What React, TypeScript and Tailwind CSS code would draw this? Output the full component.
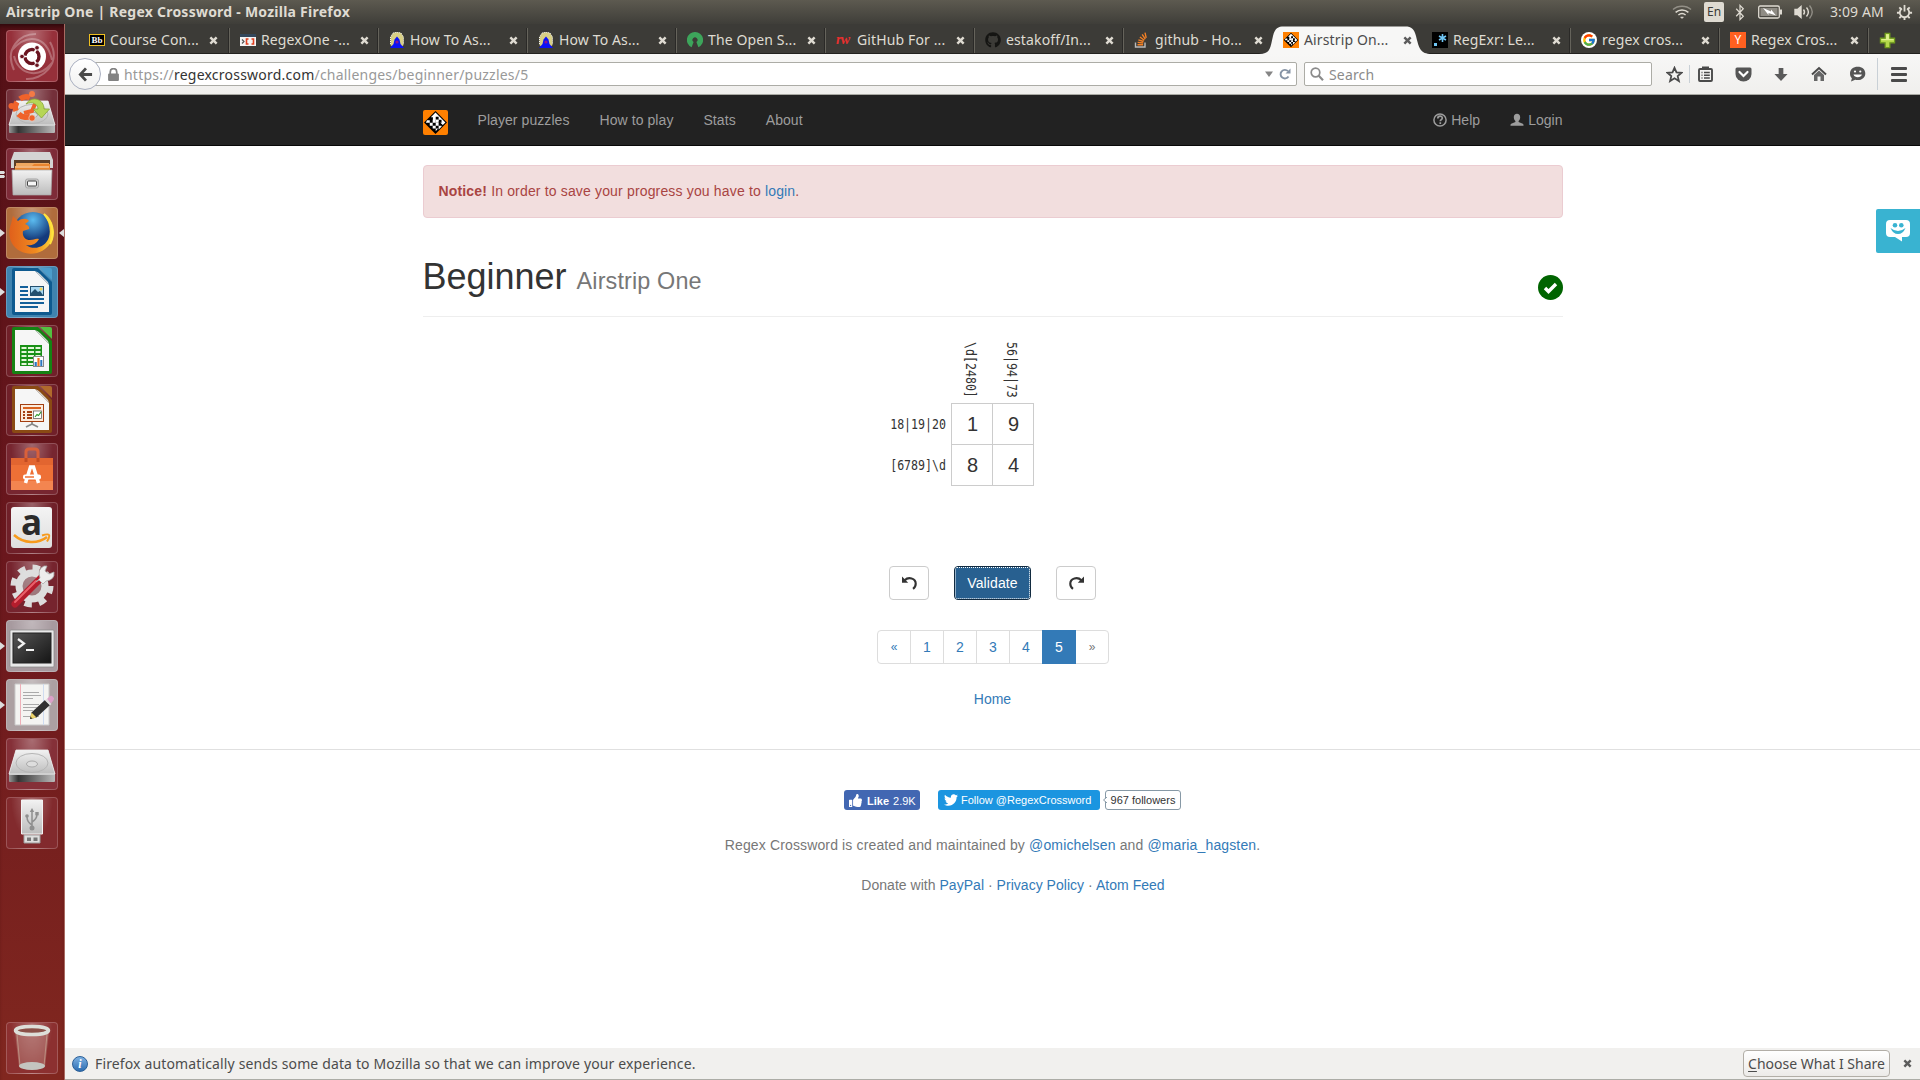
import React from "react";
import { FaTwitter, FaThumbsUp, FaGithub } from "react-icons/fa";
import { FcGoogle } from "react-icons/fc";

const ui = "font-['Noto_Sans',sans-serif]";

/* ---------- favicons ---------- */

function CrosswordMark({ className }: { className: string }) {
  return (
    <svg viewBox="0 0 24 24" className={className}>
      <rect width="24" height="24" fill="#ff8000" />
      <path d="M12 1 23 12 12 23 1 12z" fill="#000" />
      <path d="M12 2.500 21.500 12 19 14.500 16.500 12 14 9.500H9.500V7H7.500z" fill="#fff" />
      <path d="M9.300 9.300h2.900v2.900H9.300zM6.500 12.200h2.800v2.800H6.500zM12.200 12.200H15V15h-2.800zM9.300 15h2.900v2.800H9.300zM15 15h2.800v1L15 18.700zM12.200 17.800h2.300L12.200 20.500zM3.800 9.800h2.700v2.400H2.800z" fill="#fff" />
      <path d="M12.200 6.500H15v2.800h-2.800zM15 9.300h2.800v2.900H15z" fill="#000" />
      <path d="M12.200 9.300H15v2.900h-2.800z" fill="#fff" />
    </svg>
  );
}

function Favicon({ kind }: { kind: string }) {
  const c = "block h-4 w-4 shrink-0";
  switch (kind) {
    case "bb":
      return (
        <div className="flex h-3 w-4 shrink-0 items-center justify-center border border-[#f0c020] bg-black font-['Liberation_Serif',serif] text-[9px] leading-none font-bold text-white">
          Bb
        </div>
      );
    case "one":
      return (
        <svg viewBox="0 0 16 16" className={c}>
          <rect y="2" width="16" height="12" fill="#f4f4f4" />
          <rect y="2" width="16" height="3" fill="#33475b" />
          <path d="M2 7.5l2 2-2 2" stroke="#555" strokeWidth="1.2" fill="none" />
          <path d="M8.5 7H6.5v5h2M11.5 7h2v5h-2" stroke="#e04020" strokeWidth="1.6" fill="none" />
        </svg>
      );
    case "wiz":
      return (
        <svg viewBox="0 0 16 16" className={c}>
          <path d="M4 1l4-1 4 1 2.500 4v8l-2 2h-9l-2-2V5z" fill="#d8cf86" />
          <path d="M1.500 12V5L4 1l4-.8L12 1l2.500 4v7" stroke="#f2f2f2" strokeDasharray="1 1" fill="none" />
          <path d="M8 4.500l2.500 3 1 4.500 3.500 4H1l3.500-4 1-4.500z" fill="#0b12f5" />
          <circle cx="8" cy="10" r="1.600" fill="#8a1590" />
        </svg>
      );
    case "osi":
      return (
        <svg viewBox="0 0 16 16" className={c}>
          <path d="M8 0a8 8 0 0 0-3.4 15.3L6.6 10a2.5 2.5 0 1 1 2.8 0l2 5.3A8 8 0 0 0 8 0z" fill="#3da55b" />
        </svg>
      );
    case "rw":
      return (
        <div className="w-4 shrink-0 font-['Liberation_Serif',serif] text-[14px] leading-4 font-bold tracking-[-0.8px] text-[#e8302e] italic">
          rw
        </div>
      );
    case "gh":
      return <FaGithub className="h-4 w-4 shrink-0 text-[#151513]" />;
    case "so":
      return (
        <svg viewBox="0 0 16 16" className={c}>
          <path d="M1.500 10.500V15h9.500v-4.500" stroke="#bbb" strokeWidth="1.400" fill="none" />
          <path d="M3.500 12.800h5.600M3.700 10.400l5.500.6M4.400 7.800l5.200 1.700M5.900 5l4.400 3.200M8.200 2.400l3.100 4.800M11 .6l1.200 5.200" stroke="#f48024" strokeWidth="1.400" />
        </svg>
      );
    case "cw":
      return <CrosswordMark className={c} />;
    case "rx":
      return (
        <svg viewBox="0 0 16 16" className={c}>
          <rect width="16" height="16" fill="#000" />
          <rect x="2" y="11" width="3" height="3" fill="#70c7f5" />
          <path d="M10.500 2v8M7 4l7 4M14 4L7 8" stroke="#70c7f5" strokeWidth="1.600" />
        </svg>
      );
    case "g":
      return (
        <div className="flex h-4 w-4 shrink-0 items-center justify-center rounded-full bg-white">
          <FcGoogle className="h-[14px] w-[14px]" />
        </div>
      );
    default:
      return (
        <div className="flex h-4 w-4 shrink-0 items-center justify-center bg-[#ff6020] text-[12px] leading-none text-white">Y</div>
      );
  }
}

function Cross({ className }: { className: string }) {
  return (
    <svg viewBox="0 0 10 10" className={className}>
      <path d="M1.500 1.500l7 7M8.500 1.500l-7 7" stroke="currentColor" strokeWidth="2.700" />
    </svg>
  );
}

const tabs = [
  { icon: "bb", text: "Course Con..." },
  { icon: "one", text: "RegexOne -..." },
  { icon: "wiz", text: "How To As..." },
  { icon: "wiz", text: "How To As..." },
  { icon: "osi", text: "The Open S..." },
  { icon: "rw", text: "GitHub For ..." },
  { icon: "gh", text: "estakoff/In..." },
  { icon: "so", text: "github - Ho..." },
  { icon: "cw", text: "Airstrip On..." },
  { icon: "rx", text: "RegExr: Le..." },
  { icon: "g", text: "regex cros..." },
  { icon: "y", text: "Regex Cros..." },
];

function TabStrip() {
  return (
    <div className="flex h-[30px] border-b border-[#22211f] bg-[#3c3b37] pl-[15px]">
      {tabs.map((t, i) => {
        const active = i === 8;
        return (
          <div key={i} className="relative flex h-[30px] w-[149px] shrink-0 items-center pt-[2px] pl-2.5">
            {active && (
              <svg viewBox="0 0 173 28" className="absolute top-[2px] -left-[13px] h-7 w-[173px]">
                <path d="M0 28C12 28 11 22 14 10C16 2 19 .5 25 .5H146C153 .5 155 3 157 10C160 22 161 28 173 28z" fill="#f7f7f6" />
              </svg>
            )}
            <div className={"relative flex w-full items-center " + (i === 0 ? "-left-px" : "left-px")}>
              <Favicon kind={t.icon} />
              <span
                className={
                  "ml-[5px] w-[98px] text-[14px] leading-5 tracking-[0.13px] whitespace-nowrap " +
                  (active ? "text-[#4c4c4c]" : "text-[#dfdbd2]")
                }
              >
                {t.text}
              </span>
              <Cross className={"ml-px h-[9px] w-[9px] shrink-0 " + (active ? "text-[#5c5c5c]" : "text-[#dfdbd2]")} />
            </div>
            {!active && i !== 7 && <div className="absolute top-1 -right-px h-[25px] w-0.5 border-l border-[#2a2927] bg-[#65635b]" />}
          </div>
        );
      })}
      <svg viewBox="0 0 18 18" className="mt-2 ml-[11px] h-[17px] w-[17px]">
        <path d="M6.500 1.500h5v5h5v5h-5v5h-5v-5h-5v-5h5z" fill="#b4d84a" stroke="#6f9a1e" strokeWidth="1.300" />
        <path d="M7.500 2.500h3v5h5v1.200h-13V7.500h5z" fill="#dff08f" />
      </svg>
    </div>
  );
}

/* ---------- system panel ---------- */

function TopPanel() {
  return (
    <div className="flex h-6 items-center bg-linear-to-b from-[#5d5a50] to-[#3f3e39] pl-1.5 text-[#dfdbd2]">
      <span className="text-[14px] leading-6 font-bold tracking-[0.24px] whitespace-nowrap">Airstrip One | Regex Crossword - Mozilla Firefox</span>
      <div className="flex-1" />
      <svg viewBox="0 0 20 14" className="h-[14px] w-5" fill="none" stroke="#dfdbd2" strokeWidth="1.500">
        <path d="M1 4.500C6 .2 14 .2 19 4.500" opacity=".45" />
        <path d="M3.600 7.400c3.700-3.200 9.100-3.200 12.800 0M6.400 10c2.100-1.800 5.100-1.800 7.200 0" />
        <path d="M8.500 12l1.500 1.600 1.500-1.600z" fill="#dfdbd2" strokeWidth=".5" />
      </svg>
      <div className="ml-3 flex h-5 w-5 items-center justify-center rounded-[2px] bg-[#dfdbd2] text-[12px] leading-none text-[#3c3b37]">En</div>
      <svg viewBox="0 0 10 18" className="ml-[11px] h-[17px] w-2.5" fill="none" stroke="#dfdbd2" strokeWidth="1.300">
        <path d="M1 5l7.500 8L5 16.500v-15L8.500 5 1 13" />
      </svg>
      <svg viewBox="0 0 24 14" className="ml-[13px] h-[14px] w-6">
        <rect x=".7" y="1" width="20.600" height="12" rx="1.500" fill="none" stroke="#dfdbd2" strokeWidth="1.300" />
        <rect x="2.500" y="3" width="17" height="8" fill="#8f8c84" />
        <rect x="22" y="4.500" width="2" height="5" fill="#dfdbd2" />
        <path d="M5 3l8 3.500 0-2 5 6-7.500-2.600v2z" fill="#fff" />
      </svg>
      <svg viewBox="0 0 20 16" className="ml-3 h-4 w-5" fill="none" stroke="#dfdbd2" strokeWidth="1.400">
        <path d="M1 5.500h2.500L7 2.500v11l-3.500-3H1z" fill="#dfdbd2" />
        <path d="M9.500 5.500c1.200 1.500 1.200 3.500 0 5M12.500 3.500c2.300 2.700 2.300 6.300 0 9" />
        <path d="M15.500 1.500c3.400 4 3.400 9 0 13" opacity=".45" />
      </svg>
      <span className="ml-4 w-[54px] text-[14px] leading-6 tracking-[0.1px] whitespace-nowrap">3:09 AM</span>
      <svg viewBox="0 0 18 18" className="mr-[7px] ml-3 h-[17px] w-[17px]" fill="none" stroke="#dfdbd2">
        <path d="M6.300 4.800a5 5 0 1 0 5.400 0" strokeWidth="1.900" />
        <path d="M9 1v7" strokeWidth="1.900" />
        <path d="M3.500 3.500l1.800 1.800M14.500 3.500l-1.800 1.800M1 9.300h2.500M14.500 9.300H17M3.500 15l1.800-1.900M14.500 15l-1.800-1.900M9 14.500V17" strokeWidth="2" />
      </svg>
    </div>
  );
}

/* ---------- browser toolbar ---------- */

function Toolbar() {
  return (
    <div className="flex h-[41px] items-center border-b border-[#a9a9a3] bg-linear-to-b from-[#f7f7f6] to-[#f0efed]">
      <div className="z-10 ml-1 flex h-8 w-8 shrink-0 items-center justify-center rounded-full border border-[#a9afc0] bg-linear-to-b from-white to-[#f1f1f0]">
        <svg viewBox="0 0 16 16" className="h-[15px] w-[15px]" fill="none" stroke="#4a4a4a" strokeWidth="3">
          <path d="M8.500 1.500L2.500 8l6 6.500M3 8h12" />
        </svg>
      </div>
      <div className="-ml-4 flex h-6 w-[1212px] items-center rounded-[2px] border border-[#acaca6] bg-white pl-[22px]">
        <svg viewBox="0 0 10 12" className="h-[13px] w-[11px]">
          <rect y="5" width="10" height="7" rx="1" fill="#828282" />
          <path d="M2 6V3.600a3 3 0 0 1 6 0V6" fill="none" stroke="#828282" strokeWidth="1.600" />
        </svg>
        <span className="mt-px ml-[5px] text-[14px] leading-5 tracking-[0.22px] whitespace-nowrap text-[#999]">
          https://<span className="text-[#333]">regexcrossword.com</span>/challenges/beginner/puzzles/5
        </span>
        <div className="flex-1" />
        <svg viewBox="0 0 8 6" className="h-[6px] w-2"><path d="M0 .5h8L4 6z" fill="#858585" /></svg>
        <svg viewBox="0 0 12 12" className="mr-[5px] ml-1.5 h-3 w-3" fill="none" stroke="#8593a5" strokeWidth="1.900">
          <path d="M9.500 8.500A4.300 4.300 0 1 1 9 3.200" />
          <path d="M11.500.5v5h-5z" fill="#8593a5" stroke="none" />
        </svg>
      </div>
      <div className="ml-[7px] flex h-6 w-[348px] items-center rounded-[2px] border border-[#acaca6] bg-white pl-[5px]">
        <svg viewBox="0 0 14 14" className="h-[14px] w-[14px]" fill="none" stroke="#8b8b8b">
          <circle cx="5.500" cy="5.500" r="4.300" strokeWidth="1.700" />
          <path d="M8.500 8.500l4.500 4.700" strokeWidth="2.200" />
        </svg>
        <span className="mt-px ml-[5px] text-[14px] leading-5 tracking-[0.15px] text-[#8b8b8b]">Search</span>
      </div>
      <svg viewBox="0 0 17 17" className="ml-[14px] h-[17px] w-[17px]">
        <path d="M8.500 1.800l2 4.600 5 .4-3.800 3.300 1.200 4.900-4.400-2.700L4.100 15l1.200-4.900L1.500 6.800l5-.4z" fill="none" stroke="#4a4a4a" strokeWidth="1.800" />
      </svg>
      <div className="ml-1.5 h-[18px] w-px bg-[#c9d0d6]" />
      <svg viewBox="0 0 15 16" className="ml-2 h-4 w-[15px]" fill="none" stroke="#4a4a4a">
        <rect x="1" y="3" width="13" height="12" rx="1" strokeWidth="1.900" />
        <path d="M5 2.500V1.500h5v1" strokeWidth="2" />
        <path d="M3.500 6.500h1M3.500 9.300h1M3.500 12h1M6 6.500h5.800M6 9.300h5.800M6 12h5.800" strokeWidth="1.500" />
      </svg>
      <svg viewBox="0 0 17 15" className="ml-[22px] h-[15px] w-[17px]">
        <path d="M2 .5h13q1.500 0 1.500 1.500v5a8 7.500 0 0 1-16 0V2Q.5.5 2 .5z" fill="#555" />
        <path d="M4.500 5l4 4 4-4" fill="none" stroke="#fff" strokeWidth="2.200" strokeLinecap="round" />
      </svg>
      <svg viewBox="0 0 14 16" className="ml-[22px] h-[15px] w-[14px]"><path d="M4.500 1h5v6.500H14L7 15 0 7.500h4.500z" fill="#5a5a5a" /></svg>
      <svg viewBox="0 0 16 16" className="ml-[23px] h-4 w-4">
        <path d="M1 8.500L8 2l7 6.500" fill="none" stroke="#4a4a4a" strokeWidth="2" />
        <path d="M3 9l5-4.500L13 9v6H9.500v-4.500h-3V15H3z" fill="#666" />
      </svg>
      <svg viewBox="0 0 17 16" className="ml-[22px] h-4 w-[17px]">
        <path d="M8.700.8c4.400 0 7.600 2.700 7.600 6.600s-3.200 6.700-7.600 6.700c-1 0-1.700-.1-2.500-.3L2 15.400l.9-3.200C1.600 11 1 9.300 1 7.400 1 3.500 4.300.8 8.700.8z" fill="#555" />
        <circle cx="6" cy="5.500" r="1.100" fill="#fff" />
        <circle cx="11.300" cy="5.500" r="1.100" fill="#fff" />
        <path d="M4.500 8.500h8.400c-.8 3.600-7.600 3.600-8.400 0z" fill="#fff" />
      </svg>
      <div className="ml-[11px] h-8 w-px bg-[#c9d0d6]" />
      <div className="ml-[13px] flex w-4 flex-col gap-[3px]">
        <div className="h-[3px] rounded-[1px] bg-[#4a4a4a]" />
        <div className="h-[3px] rounded-[1px] bg-[#4a4a4a]" />
        <div className="h-[3px] rounded-[1px] bg-[#4a4a4a]" />
      </div>
    </div>
  );
}

/* ---------- launcher ---------- */

function Drive() {
  return (
    <>
      <path d="M10 12h32l7 24v6q0 2-2 2H5q-2 0-2-2v-6z" fill="#b9b9b9" />
      <path d="M10 12h32l7 24H3z" fill="url(#metal)" stroke="#ededed" strokeWidth=".8" />
      <path d="M3 37h46v6q0 1-2 1H5q-2 0-2-1z" fill="url(#darkmetal)" />
      <ellipse cx="26" cy="25" rx="16" ry="9.500" fill="none" stroke="#b5b5b5" />
      <ellipse cx="26" cy="26" rx="5.500" ry="3" fill="#ddd" stroke="#aaa" />
    </>
  );
}

function DocPage({ color, dark }: { color: string; dark: string }) {
  return (
    <>
      <path d="M6 4q0-2 2-2h24l14 14v31q0 2-2 2H8q-2 0-2-2z" fill={dark} />
      <path d="M34 2h10q2 0 2 2v10z" fill={color} />
      <path d="M9 5h20l14 14v27H9z" fill="#f6f6f6" />
      <path d="M29 5l14 14q-1-4-4-6l-5-5q-2-2-5-3z" fill="#d5d5d5" />
    </>
  );
}

const icons: Record<string, React.ReactNode> = {
  dash: (
    <>
      <path d="M8 40C-2 18 14 4 30 4M44 12c12 22-8 38-24 37M6 20c14-16 34-16 40 10M46 33C32 50 12 44 8 26" fill="none" stroke="#fff" strokeOpacity=".28" strokeWidth="2" />
      <circle cx="26" cy="26.500" r="14" fill="#fff" />
      <circle cx="26" cy="26.500" r="7" fill="none" stroke="#6a1420" strokeWidth="3.400" />
      <path d="M26 26.500L13 26.500M26 26.500l7-12M26 26.500l7 12" stroke="#fff" strokeWidth="1.600" />
      <circle cx="26" cy="26.500" r="5" fill="#fff" />
      <circle cx="16" cy="26.500" r="2.300" fill="#6a1420" stroke="#fff" strokeWidth=".8" />
      <circle cx="31" cy="17.800" r="2.300" fill="#6a1420" stroke="#fff" strokeWidth=".8" />
      <circle cx="31" cy="35.200" r="2.300" fill="#6a1420" stroke="#fff" strokeWidth=".8" />
    </>
  ),
  install: (
    <>
      <Drive />
      <path d="M24 8.500A10 10 0 0 0 14 10M11 13a10 10 0 0 0-1 9M12.500 25a10 10 0 0 0 12 2" fill="none" stroke="#f0622a" strokeWidth="5.500" />
      <path d="M18 24l8-2 3-7" fill="none" stroke="#f0622a" strokeWidth="4" />
      <circle cx="5.500" cy="17" r="3" fill="#f0622a" />
      <circle cx="26" cy="5" r="3" fill="#f47a45" />
      <circle cx="26" cy="29" r="3.200" fill="#f0622a" stroke="#e8e8e8" strokeWidth=".6" />
      <path d="M20 15c6-9 18-5 18 5h5.500L35.500 29 27 20h5c0-5-6-8-12-5z" fill="#b6d656" stroke="#86a436" strokeWidth=".8" />
    </>
  ),
  files: (
    <>
      <path d="M8 4h36l3 8v8H5v-8z" fill="#d4d4d4" />
      <path d="M8 12h36v10H8z" fill="#5d3d26" />
      <path d="M10 15h33v3H10z" fill="#f0a860" />
      <path d="M9 18h17l2-2h16v7H9z" fill="#e9842e" />
      <path d="M9 19h34" stroke="#fbe2c4" />
      <path d="M6 22h40l-1 25H7z" fill="url(#metal)" stroke="#a9a9a9" strokeWidth=".7" />
      <rect x="19.500" y="31" width="13" height="9" rx="2" fill="#ccc" stroke="#a5a5a5" />
      <rect x="21.500" y="33" width="9" height="5" rx="1" fill="#f7f7f7" stroke="#444" />
    </>
  ),
  firefox: (
    <>
      <circle cx="27" cy="25" r="20" fill="url(#globe)" />
      <path d="M38 7c9 6 12 18 7 28-6 11-20 15-31 9C4 39 1 27 5 17l2-8 5 5c4-3 9-3 11 0l-4 3c3 1 5 3 4 5l-6 2c-1 5 2 9 7 9 4 0 5-2 9-1-3 6-9 7-13 6 8 6 20 2 23-8 2-7 0-15-5-23z" fill="url(#fox)" />
      <path d="M38 7c8 6 12 19 6 30 6-13 1-21-6-30z" fill="#fff04f" stroke="#ffe23d" strokeWidth="2" />
    </>
  ),
  writer: (
    <>
      <DocPage color="#4c9dcb" dark="#0e5a8f" />
      <path d="M14 21h8M14 25h8M14 29h8M14 33h24M14 37h24M14 41h18" stroke="#14609a" strokeWidth="2" />
      <rect x="24.500" y="20.500" width="13" height="9" fill="#a9d8f2" stroke="#24506f" />
      <path d="M25 29v-2l4-4 3 3 2-1 3 4z" fill="#24506f" />
      <circle cx="35" cy="23" r="1.500" fill="#f7d14b" />
    </>
  ),
  calc: (
    <>
      <DocPage color="#53c041" dark="#158313" />
      <rect x="14" y="20" width="22" height="21" fill="#199016" />
      <path d="M15.500 23h5M22 23h6M29.500 23h5M15.500 27h5M22 27h6M29.500 27h5M15.500 31h5M22 31h6M29.500 31h5M15.500 35h5M22 35h6M15.500 39h5M22 39h5" stroke="#e4f6da" strokeWidth="2.200" />
      <rect x="27.500" y="31.500" width="10" height="10" fill="#fff" stroke="#888" />
      <path d="M29.700 41v-4" stroke="#2b77c0" strokeWidth="2.200" />
      <path d="M32.500 41v-8" stroke="#f0731e" strokeWidth="2.200" />
      <path d="M35.300 41v-6" stroke="#2b77c0" strokeWidth="2" />
    </>
  ),
  impress: (
    <>
      <DocPage color="#b06a2c" dark="#8a4a14" />
      <rect x="14.500" y="20.500" width="23" height="17" fill="#fbeadb" stroke="#a33e10" />
      <path d="M17 24h18" stroke="#d9621f" strokeWidth="2" />
      <path d="M17 28h2M17 31h2M17 34h2M21 28h5M21 31h5M21 34h5" stroke="#a33e10" strokeWidth="2" />
      <rect x="27.500" y="27" width="8" height="7.500" fill="#fff" stroke="#666" strokeWidth=".8" />
      <path d="M29 33l2-2.500 1.500 1L35 28" stroke="#2d9a2d" fill="none" strokeWidth="1.200" />
      <path d="M26 38v2l-6 3M26 40l6 3" stroke="#888" strokeWidth="1.800" fill="none" />
    </>
  ),
  software: (
    <>
      <path d="M20 18V9q0-3 3-3h6q3 0 3 3v9" fill="none" stroke="#d9603a" strokeWidth="3" />
      <path d="M5 15h42v32H5z" fill="#ee7036" />
      <path d="M5 15h42v7H5z" fill="#e26530" />
      <path d="M20 15v4M32 15v4" stroke="#c24c22" strokeWidth="3" />
      <path d="M5 38h42v9H5z" fill="#f38550" />
      <path d="M19.500 40l5-16h3l5 16" fill="none" stroke="#fff" strokeWidth="3.500" />
      <rect x="17" y="31.500" width="18" height="5" rx="2" fill="#fff" />
      <path d="M19 34h9" stroke="#ee7036" strokeWidth="1.500" />
    </>
  ),
  settings: (
    <>
      <circle cx="26" cy="25" r="18.500" fill="none" stroke="#dcdcdc" strokeWidth="6" strokeDasharray="7.300 7.230" />
      <circle cx="26" cy="25" r="13" fill="#bbb" fillOpacity=".5" stroke="#dedede" strokeWidth="7" />
      <path d="M9 43L36 16" stroke="#b41d2c" strokeWidth="7" strokeLinecap="round" />
      <path d="M9 41L30 20" stroke="#e9606a" strokeWidth="2" strokeLinecap="round" />
      <path d="M30 21l4-4Q31 8 38 5l3 0-2 5 4 3 5-2q1 8-8 9l-3 3-4-4z" fill="#ededed" stroke="#a9a9a9" strokeWidth=".8" />
    </>
  ),
  terminal: (
    <>
      <rect x="4" y="10" width="44" height="37" rx="1" fill="#e9e9e9" stroke="#8c8c8c" strokeWidth=".8" />
      <rect x="7" y="13" width="38" height="30" fill="url(#term)" stroke="#222" />
      <path d="M12 19l6 4.500-6 4.500M20 30h8" fill="none" stroke="#f2f2f2" strokeWidth="2.200" />
    </>
  ),
  editor: (
    <>
      <path d="M9 5h34v41H9z" fill="#f4f4f2" stroke="#c9c9c9" />
      <path d="M14.500 5v41" stroke="#eeb0b8" />
      <path d="M37.500 5v41" stroke="#cfdcf0" />
      <path d="M17 13.500h16M17 16.500h18M17 19.500h10M17 25.500h16M17 28.500h14M17 31.500h10M17 37.500h16" stroke="#aaa" strokeWidth="1" />
      <path d="M24 40l1.500-6.500L39 21l5 5-13.500 12.500z" fill="#303030" />
      <path d="M41 20l2.500-2.500q1.500-1.500 3.500.3t.4 3.700L45 24.500z" fill="#dca0c8" />
      <path d="M39 21.500l5 5 1.500-1.500L40.500 20z" fill="#ddd" />
      <path d="M24 40l1.500-6.500 5 5z" fill="#ecd36a" />
      <path d="M24 40l.6-2.300 1.700 1.700z" fill="#222" />
    </>
  ),
  disk: <Drive />,
  usb: (
    <>
      <path d="M18 38h16v8H18z" fill="#dedede" stroke="#9b9b9b" />
      <path d="M21 40.500h4v3.500h-4zM27.500 40.500h4v3.500h-4z" fill="#777" />
      <path d="M15.500 3h21v34h-21z" fill="url(#metal)" stroke="#f3f3f3" />
      <path d="M26 31V13M26 28q-5-3-5-8M26 25q5-3 5-8" fill="none" stroke="#8f8f8f" strokeWidth="1.500" />
      <path d="M23.800 15L26 11l2.200 4z" fill="#8f8f8f" />
      <circle cx="26" cy="31" r="2.500" fill="#8f8f8f" />
      <circle cx="21" cy="19" r="1.800" fill="#8f8f8f" />
      <rect x="29.300" y="15" width="3.400" height="3.400" fill="#8f8f8f" />
    </>
  ),
  trash: (
    <>
      <path d="M9 9h34l-4 36q-13 5-26 0z" fill="#c89a94" fillOpacity=".4" />
      <path d="M11 12l3 32M41 12l-3 32" stroke="#ddb" strokeOpacity=".4" />
      <ellipse cx="26" cy="44" rx="13" ry="4" fill="#c4c5bf" />
      <ellipse cx="26" cy="8.500" rx="16.500" ry="4" fill="#8b5048" stroke="#dddfd9" strokeWidth="3.500" />
    </>
  ),
};

function AmazonIcon() {
  return (
    <div className="relative m-1 h-[41px] w-[41px] rounded-[3px] bg-linear-to-b from-[#f4f4f4] to-[#dedede]">
      <div className="text-center font-['Open_Sans',sans-serif] text-[35px] leading-[30px] font-bold text-[#2b2b2b]">a</div>
      <svg viewBox="0 0 41 12" className="absolute bottom-[3px] left-0 h-3 w-[41px]" fill="none" stroke="#f79a1c">
        <path d="M3 2c10 9 24 9 33 2" strokeWidth="2.500" />
        <path d="M31 2.500q6-2 7-.5t-2 6.500" strokeWidth="2" />
      </svg>
    </div>
  );
}

const launcher = [
  { id: "dash", bg: "bg-[#96303a]" },
  { id: "install", bg: "bg-[#74303a]" },
  { id: "files", bg: "bg-[#7e2b38]", left: 2 },
  { id: "firefox", bg: "bg-[#b06c3c]", left: 1, right: true },
  { id: "writer", bg: "bg-[#3f83af]", left: 1 },
  { id: "calc", bg: "bg-[#702029]" },
  { id: "impress", bg: "bg-[#702029]" },
  { id: "software", bg: "bg-[#772630]" },
  { id: "amazon", bg: "bg-[#702029]" },
  { id: "settings", bg: "bg-[#76242e]" },
  { id: "terminal", bg: "bg-[#a79a9f]", left: 1 },
  { id: "editor", bg: "bg-[#aca0a2]", left: 1 },
  { id: "disk", bg: "bg-[#853038]" },
  { id: "usb", bg: "bg-[#822a2d]" },
  { id: "trash", bg: "bg-[#8c3030]" },
] as { id: string; bg: string; left?: number; right?: boolean }[];

function Launcher() {
  return (
    <div className="flex w-[65px] shrink-0 flex-col gap-[7px] border-r border-[#a96a62] bg-linear-to-b from-[#541016] via-[#6a171d] to-[#81271f] pt-1.5 pb-1.5 shadow-[inset_0_5px_5px_-3px_#2a080a]">
      <svg className="absolute h-0 w-0">
        <defs>
          <linearGradient id="metal" x2="0" y2="1"><stop stopColor="#f2f2f2" /><stop offset="1" stopColor="#bcbcbc" /></linearGradient>
          <linearGradient id="darkmetal"><stop stopColor="#999" /><stop offset=".2" stopColor="#333" /><stop offset="1" stopColor="#bbb" /></linearGradient>
          <radialGradient id="globe" cx=".5" cy=".2"><stop stopColor="#5cbcf0" /><stop offset="1" stopColor="#143a7c" /></radialGradient>
          <linearGradient id="fox"><stop stopColor="#e0601b" /><stop offset=".6" stopColor="#f08a20" /><stop offset="1" stopColor="#ffdc3c" /></linearGradient>
          <linearGradient id="term" x2="1" y2="1"><stop stopColor="#555" /><stop offset="1" stopColor="#151515" /></linearGradient>
        </defs>
      </svg>
      {launcher.map((l) => (
        <div key={l.id} className={"flex h-[52px] items-center " + (l.id === "trash" ? "mt-auto" : "")}>
          <div className="flex w-1.5 flex-col gap-px">
            {l.left === 1 && <svg viewBox="0 0 5 8" className="h-2 w-[5px]"><path d="M0 0l5 4-5 4z" fill="#ddd" /></svg>}
            {l.left === 2 && (
              <>
                <svg viewBox="0 0 5 3" className="h-[3px] w-[5px]"><path d="M0 0h4l1 1.500L4 3H0z" fill="#ddd" /></svg>
                <svg viewBox="0 0 5 3" className="h-[3px] w-[5px]"><path d="M0 0h4l1 1.500L4 3H0z" fill="#ddd" /></svg>
              </>
            )}
          </div>
          <div className={"h-[52px] w-[52px] rounded-[4px] " + l.bg}>
            <div className="h-[52px] w-[52px] rounded-[4px] border border-white/20 bg-radial-[at_50%_0%] from-white/30 to-transparent to-60%">
              {l.id === "amazon" ? <AmazonIcon /> : <svg viewBox="1 1 50 50" className="h-[50px] w-[50px]">{icons[l.id]}</svg>}
            </div>
          </div>
          {l.right && <svg viewBox="0 0 5 8" className="ml-px h-2 w-[5px]"><path d="M5 0L0 4l5 4z" fill="#ddd" /></svg>}
        </div>
      ))}
    </div>
  );
}

/* ---------- page ---------- */

const link = "text-[#337ab7]";

function SiteNav() {
  return (
    <div className="h-[51px] border-b border-[#080808] bg-[#222]">
      <div className="mx-auto flex h-[50px] w-[1140px] items-center text-[14px] leading-5 tracking-[0.07px] text-[#9d9d9d]">
        <CrosswordMark className="mt-1 h-[25px] w-[25px] rounded-[2px]" />
        <span className="ml-[30px]">Player puzzles</span>
        <span className="ml-[30px]">How to play</span>
        <span className="ml-[30px]">Stats</span>
        <span className="ml-[30px]">About</span>
        <div className="flex-1" />
        <svg viewBox="0 0 14 14" className="mr-1 h-[14px] w-[14px]" fill="none" stroke="#9d9d9d">
          <circle cx="7" cy="7" r="6.100" strokeWidth="1.500" />
          <path d="M4.800 5.500c0-3 4.500-3 4.500-.4 0 1.600-2 1.600-2 3.200M7.300 9.300v1.700" strokeWidth="1.700" />
        </svg>
        <span>Help</span>
        <svg viewBox="0 0 14 14" className="mr-1 ml-[30px] h-[14px] w-[14px]">
          <path d="M7 .8c2 0 3.200 1.500 3.200 3.500 0 1.500-.7 3-1.600 3.700v1l4.200 1.800q.7.400.7 1.200v.8H.5V12q0-.8.700-1.200L5.400 9V8C4.500 7.300 3.800 5.800 3.800 4.300 3.800 2.300 5 .8 7 .8z" fill="#9d9d9d" />
        </svg>
        <span className="tracking-normal">Login</span>
      </div>
    </div>
  );
}

function Turn({ className }: { className: string }) {
  return (
    <svg viewBox="0 0 14 14" className={className}>
      <path d="M2.500 4C6 .5 12.800 2 12.800 7.300c0 2-1 3.600-2.500 4.700" fill="none" stroke="#333" strokeWidth="2" />
      <path d="M0 .5v5.800h5.800z" fill="#333" />
    </svg>
  );
}

function Puzzle() {
  const rows = [
    { clue: "18|19|20", cells: ["1", "9"] },
    { clue: "[6789]\\d", cells: ["8", "4"] },
  ];
  const clue = "font-['DejaVu_Sans_Mono',monospace] text-[11.6px] text-[#333]";
  return (
    <div className="mx-auto mt-[25px] w-[207px]">
      <div className="ml-[62px] flex">
        {["\\d[2480]", "56|94|73"].map((c) => (
          <div key={c} className={"ml-0 h-[61px] w-[41px] scale-x-115 leading-[43px] [writing-mode:vertical-rl] " + clue}>{c}</div>
        ))}
      </div>
      {rows.map((r, i) => (
        <div key={i} className="flex h-[41px]">
          <span className={"w-[57px] scale-y-115 text-right leading-[42px] " + clue}>{r.clue}</span>
          <div className="ml-[5px] flex">
            {r.cells.map((v, j) => (
              <div key={j} className="-mr-px h-[42px] w-[42px] border border-[#ccc] pl-px text-center text-[20px] leading-10 text-[#333]">{v}</div>
            ))}
          </div>
        </div>
      ))}
    </div>
  );
}

function Pagination() {
  const base = "-ml-px flex h-[34px] w-[34px] items-center justify-center border pl-px first:ml-0 first:rounded-l-[4px] last:rounded-r-[4px] ";
  return (
    <div className="mx-auto mt-[30px] flex w-[232px] justify-center">
      {["«", "1", "2", "3", "4", "5", "»"].map((p) => (
        <div
          key={p}
          className={
            base +
            (p === "5"
              ? "z-10 border-[#337ab7] bg-[#337ab7] text-[14px] text-white"
              : p === "»"
                ? "border-[#ddd] text-[12px] text-[#777]"
                : p === "«"
                  ? "border-[#ddd] text-[12px] text-[#337ab7]"
                  : "border-[#ddd] text-[14px] text-[#337ab7]")
          }
        >
          {p}
        </div>
      ))}
    </div>
  );
}

function Page() {
  return (
    <div className="relative flex-1 overflow-hidden bg-white font-['Liberation_Sans',Arial,sans-serif] text-[14px] leading-5 text-[#333]">
      <SiteNav />
      <div className="mx-auto mt-[19px] w-[1140px]">
        <div className="h-[53px] rounded-[4px] border border-[#ebccd1] bg-[#f2dede] px-[15px] pt-[15px] tracking-[0.16px] text-[#a94442]">
          <b>Notice!</b> In order to save your progress you have to <span className={link}>login</span>.
        </div>
        <div className="mt-[38px] flex h-[61px] items-start justify-between border-b border-[#eee]">
          <h1 className="mt-px text-[36px] leading-10">
            Beginner <small className="text-[23.4px] tracking-[0.13px] text-[#777]">Airstrip One</small>
          </h1>
          <svg viewBox="0 0 25 25" className="mt-[19px] h-[25px] w-[25px]">
            <circle cx="12.500" cy="12.500" r="12.500" fill="#006400" />
            <path d="M7 13l3.500 3.500 7.500-7.500" fill="none" stroke="#fff" strokeWidth="3.400" />
          </svg>
        </div>
        <Puzzle />
        <div className="mt-[81px] flex justify-center gap-[25px]">
          <div className="flex h-[34px] w-10 items-center justify-center rounded-[4px] border border-[#ccc]"><Turn className="h-[15px] w-[15px]" /></div>
          <div className="flex h-[34px] w-[77px] items-center justify-center rounded-[4px] border border-[#122b40] bg-[#286090]">
            <span className="flex h-8 w-[75px] items-center justify-center rounded-[2px] border border-dotted border-white tracking-[0.1px] text-white">Validate</span>
          </div>
          <div className="flex h-[34px] w-10 items-center justify-center rounded-[4px] border border-[#ccc]"><Turn className="h-[15px] w-[15px] -scale-x-100" /></div>
        </div>
        <Pagination />
        <div className={"mt-[25px] text-center " + link}>Home</div>
      </div>

      <div className="mt-[40px] border-t border-[#e0e0e0] text-center text-[#777]">
        <div className="ml-[779px] flex pt-10 text-[11px] leading-5">
          <div className="flex h-5 w-[76px] items-center rounded-[3px] bg-[#4267b2] pl-[5px] whitespace-nowrap text-white">
            <FaThumbsUp className="mr-[5px] h-[13px] w-[13px]" />
            <b className="mt-px mr-1">Like</b><span className="mt-px">2.9K</span>
          </div>
          <div className="ml-[18px] flex h-5 w-[162px] items-center rounded-[3px] bg-[#1b95e0] pl-1.5 whitespace-nowrap text-white">
            <FaTwitter className="mr-[3px] h-[14px] w-[14px]" />
            Follow @RegexCrossword
          </div>
          <div className="relative ml-[5px] h-5 w-[76px] rounded-[3px] border border-[#8799a6] leading-[18px] whitespace-nowrap text-[#333]">
            967 followers
            <svg viewBox="0 0 4 6" className="absolute top-1.5 -left-[3px] h-1.5 w-1"><path d="M4 0L.5 3 4 6" fill="#fff" stroke="#8799a6" /></svg>
          </div>
        </div>
        <div className="mt-[25px] tracking-[0.14px]">
          Regex Crossword is created and maintained by <span className={link}>@omichelsen</span> and <span className={link}>@maria_hagsten</span>.
        </div>
        <div className="mt-5 ml-[41px] tracking-[0.03px]">
          Donate with <span className={link}>PayPal</span> · <span className={link}>Privacy Policy</span> · <span className={link}>Atom Feed</span>
        </div>
      </div>

      <div className="absolute top-[114px] right-0 flex h-11 w-11 rounded-l-[2px] bg-[#39b3d1] pt-[11px] pl-2.5">
        <svg viewBox="0 0 24 22" className="h-[22px] w-6">
          <path d="M4 0h16q4 0 4 4v9q0 4-4 4h-4v4.500L9 17H4q-4 0-4-4V4q0-4 4-4z" fill="#fff" />
          <circle cx="9" cy="5.300" r="2.300" fill="#39b3d1" />
          <circle cx="15.300" cy="5.300" r="2.300" fill="#39b3d1" />
          <path d="M4.500 8q7.500 6 15 0-2.500 6-7.500 6T4.500 8z" fill="#39b3d1" />
        </svg>
      </div>
    </div>
  );
}

function NoticeBar() {
  return (
    <div className="flex h-8 items-center border-b border-[#acaca6] bg-[#f1f0ee] pl-[7px] text-[#4c4c4c]">
      <div className="flex h-4 w-4 items-center justify-center rounded-full border border-[#2b5f97] bg-linear-to-b from-[#7db1e2] to-[#2c6cb0] font-['Liberation_Serif',serif] text-[12px] leading-none font-bold text-white italic">i</div>
      <span className="ml-[7px] text-[14px] leading-5 tracking-[0.14px] whitespace-nowrap">Firefox automatically sends some data to Mozilla so that we can improve your experience.</span>
      <div className="flex-1" />
      <div className="flex h-[27px] w-[147px] items-center justify-center rounded-[4px] border border-[#b2aea7] bg-linear-to-b from-white to-[#eceae8] text-[14px] whitespace-nowrap">
        <span><span className="underline underline-offset-2">C</span>hoose What I Share</span>
      </div>
      <Cross className="mr-2 ml-[13px] h-[9px] w-[9px] text-[#5c5c5c]" />
    </div>
  );
}

export default function App() {
  return (
    <div className={"flex h-[1080px] w-[1920px] flex-col overflow-hidden " + ui}>
      <TopPanel />
      <div className="flex min-h-0 flex-1">
        <Launcher />
        <div className="flex min-w-0 flex-1 flex-col">
          <TabStrip />
          <Toolbar />
          <Page />
          <NoticeBar />
        </div>
      </div>
    </div>
  );
}
